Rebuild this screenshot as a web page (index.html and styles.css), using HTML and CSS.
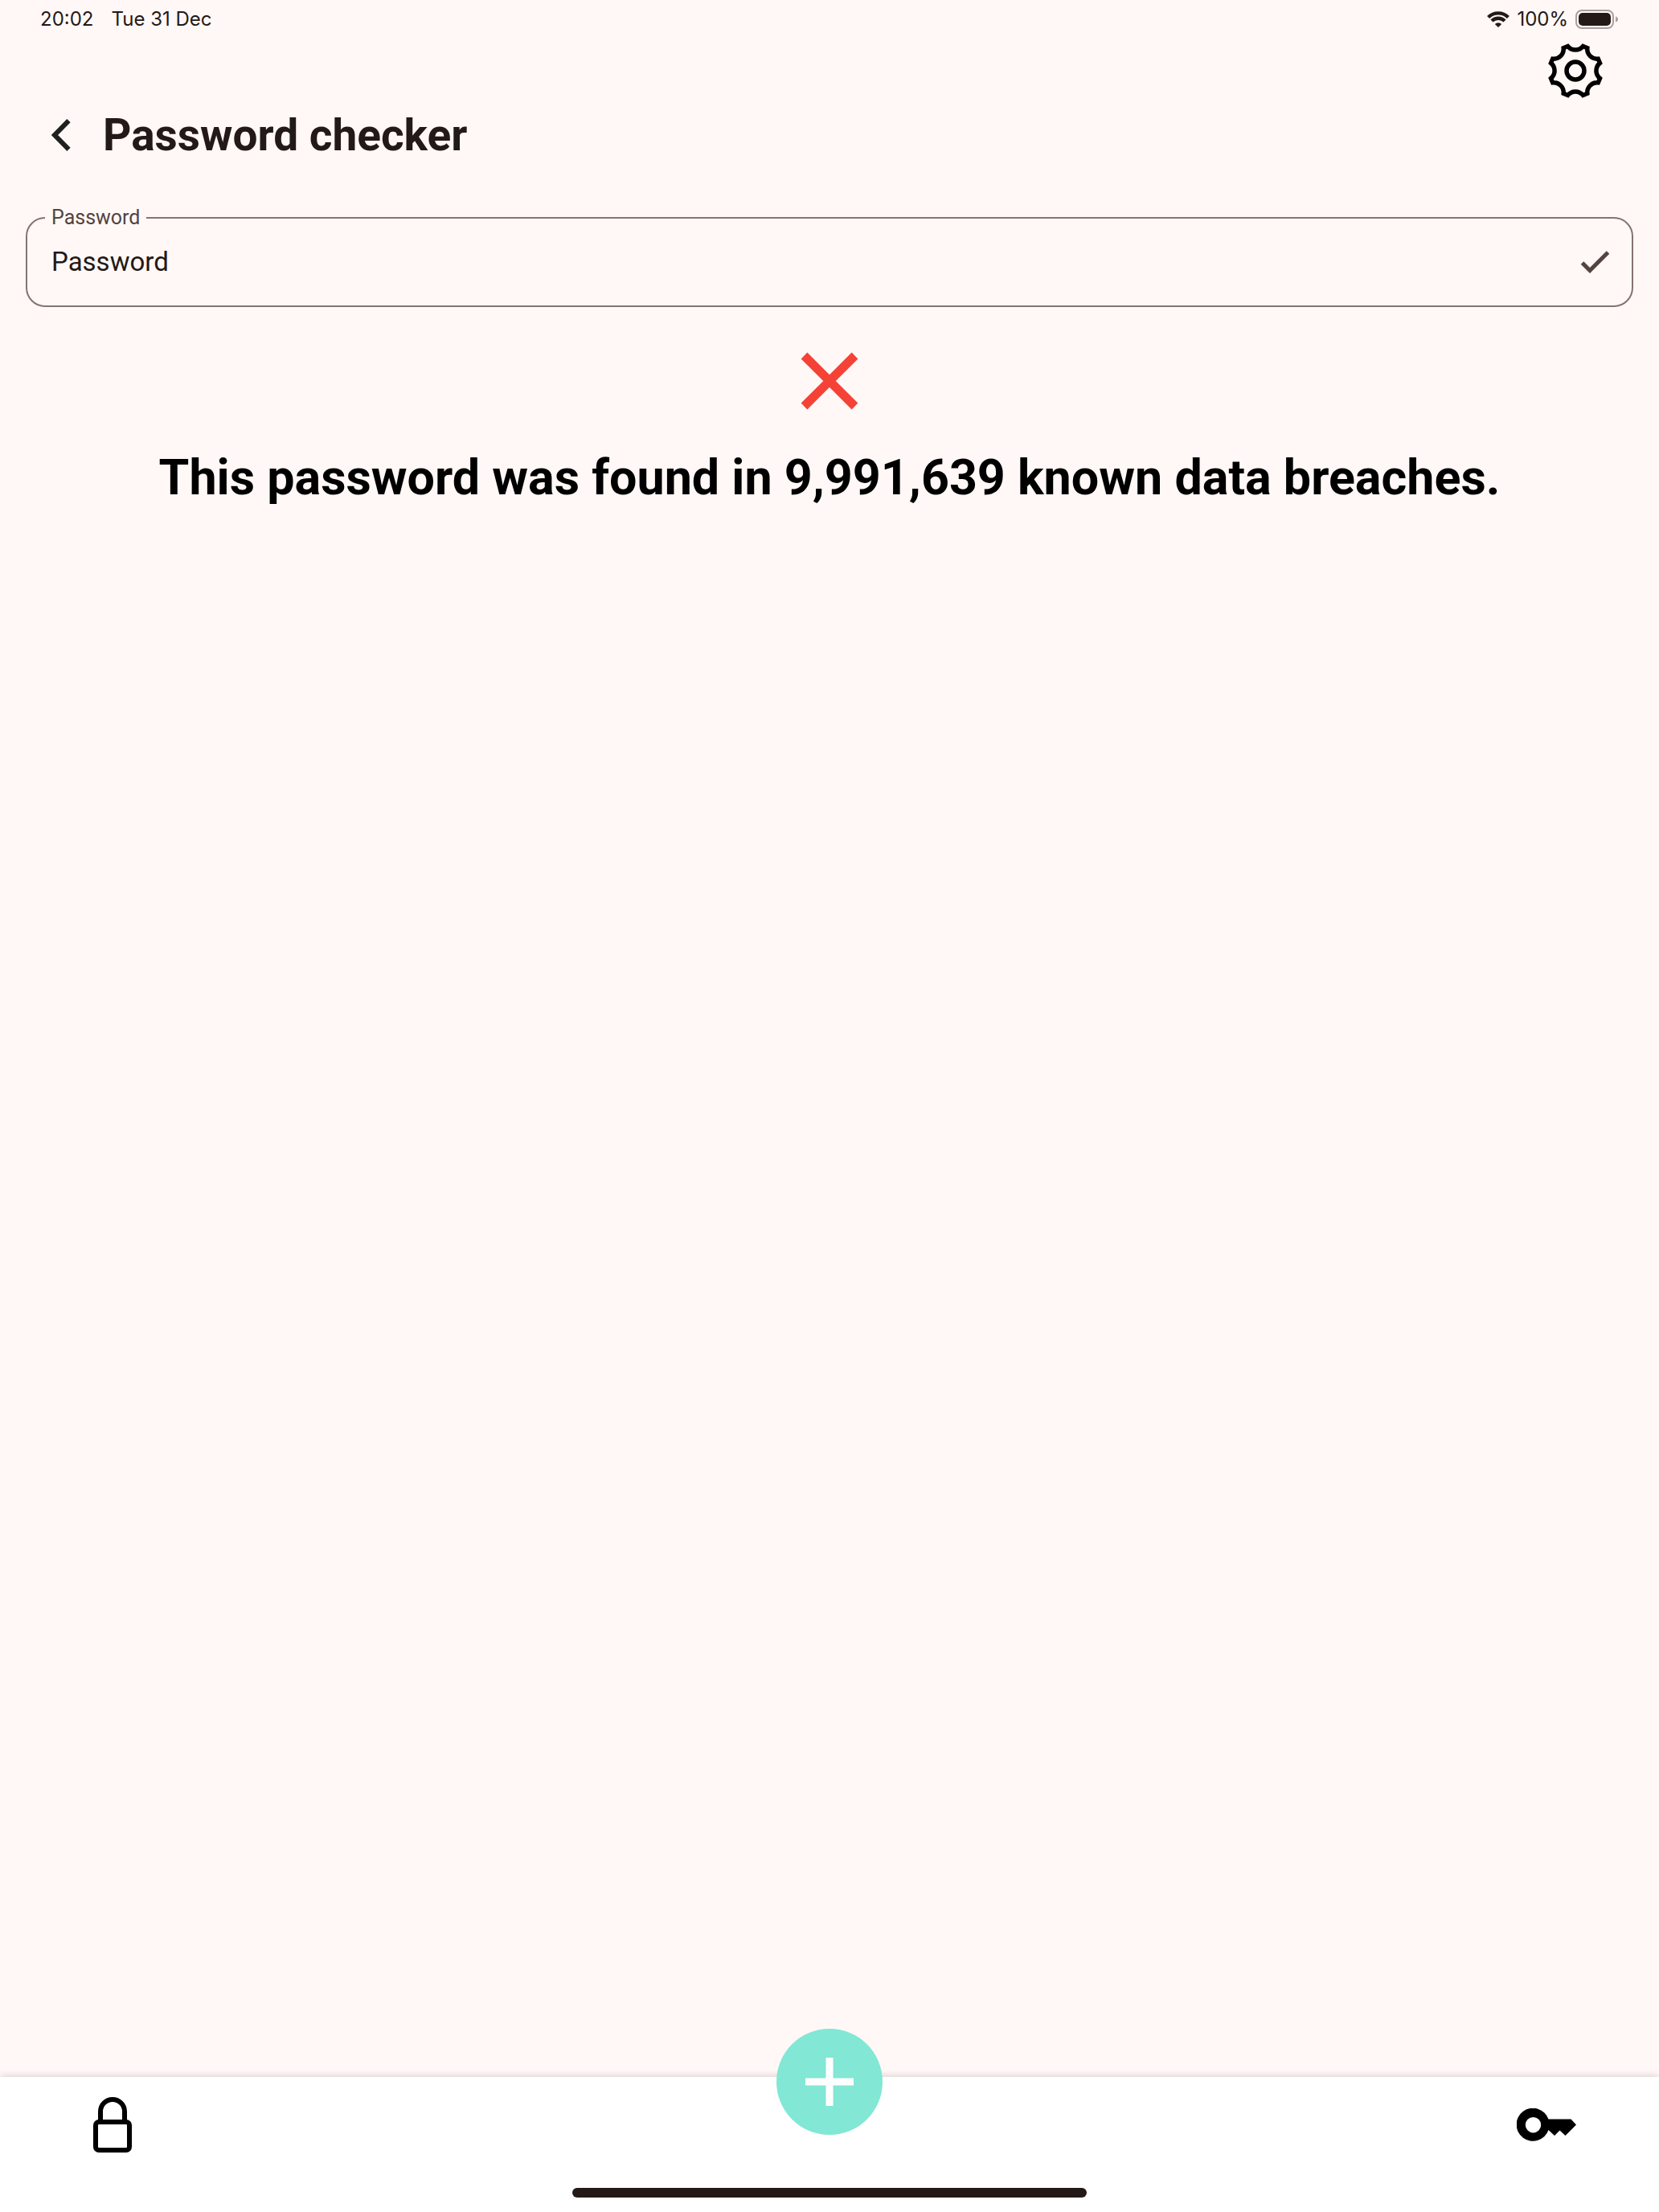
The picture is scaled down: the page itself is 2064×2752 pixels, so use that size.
FILE: index.html
```html
<!DOCTYPE html>
<html lang="en">
<head>
<meta charset="utf-8">
<meta name="viewport" content="width=device-width, initial-scale=1">
<title>Password checker</title>
<link rel="stylesheet" href="styles.css">
</head>
<body>
<div class="status-bar">
  <div class="status-group">
    <span>20:02</span>
    <span>Tue 31 Dec</span>
  </div>
  <div class="status-group status-right">
    <svg class="wifi" viewBox="0 0 28 20" aria-hidden="true">
      <g fill="none" stroke="#231917" stroke-width="4.400">
        <path d="M1.600 7.500A17.600 17.600 0 0 1 26.400 7.500"/>
        <path d="M6 12A11.300 11.300 0 0 1 22 12"/>
      </g>
      <path d="M14 20L9.800 15.900A6 6 0 0 1 18.200 15.900Z" fill="#231917"/>
    </svg>
    <span>100%</span>
    <svg class="battery" viewBox="0 0 54 24" aria-hidden="true">
      <rect x="1" y="1" width="46" height="22" rx="7" fill="none" stroke="#a9a09f" stroke-width="2"/>
      <rect x="4" y="4" width="40" height="16" rx="5" fill="#231917"/>
      <path d="M50 8.500Q53 9.500 53 12T50 15.500Z" fill="#a9a09f"/>
    </svg>
  </div>
</div>
<div class="toolbar">
  <button class="icon-button" type="button" aria-label="Settings">
    <svg class="gear" viewBox="-102 -102 204 204" fill="none" stroke="#000" stroke-width="16">
      <path d="M27.7-88.8L43.2-82.3A35.5 35.5 0 0 0 82.3-43.2L88.8-27.7A35.5 35.5 0 0 0 88.800 27.700L82.300 43.200A35.500 35.500 0 0 0 43.200 82.300L27.700 88.800A35.500 35.500 0 0 0-27.700 88.800L-43.200 82.300A35.500 35.500 0 0 0-82.300 43.200L-88.800 27.700A35.500 35.500 0 0 0-88.800-27.700L-82.300-43.200A35.500 35.500 0 0 0-43.200-82.300L-27.700-88.800A35.500 35.500 0 0 0 27.700-88.800Z"/>
      <circle r="32"/>
    </svg>
  </button>
</div>
<header class="page-header">
  <button class="icon-button" type="button" aria-label="Back">
    <svg class="icon" viewBox="0 0 48 48" fill="none" stroke="#1f2020" stroke-width="6"><path d="M21.500 6.200L4 24 21.500 41.800"/></svg>
  </button>
  <h1>Password checker</h1>
</header>
<main class="content">
  <fieldset class="field">
    <legend><label for="password">Password</label></legend>
    <div class="field-row">
      <input id="password" type="text" value="Password" autocomplete="off">
      <button class="icon-button" type="button" aria-label="Check password">
        <svg class="icon" viewBox="0 0 48 48" fill="none" stroke="#534341" stroke-width="5"><path d="M8.500 25L18 34.500 40.500 12"/></svg>
      </button>
    </div>
  </fieldset>
  <svg class="result-icon" viewBox="0 0 122 122" fill="none" stroke="#f44336" stroke-width="11" aria-hidden="true"><path d="M29.500 29.500L92.500 92.500M92.500 29.500L29.500 92.500"/></svg>
  <p class="result-text">This password was found in 9,991,639 known data breaches.</p>
</main>
<nav class="bottom-bar" aria-label="Main">
  <div class="tabs">
    <button class="icon-button" type="button" aria-label="Passwords">
      <svg class="lock" viewBox="0 0 48 69" fill="none" stroke="#000" stroke-width="6">
        <path d="M9 30V18a15 15 0 0 1 30 0V30"/>
        <rect x="3" y="31" width="42" height="35" rx="4"/>
      </svg>
    </button>
    <button class="icon-button" type="button" aria-label="Generator">
      <svg class="key" viewBox="0 0 74 42"><path fill-rule="evenodd" d="M39.500 13.500H67.500L74 20.500 60.500 34 53.500 27.500 47 34 39.500 27A20.500 20.500 0 1 1 39.500 13.500ZM20.500 11A9.700 9.700 0 1 0 20.500 30.400A9.700 9.700 0 1 0 20.500 11Z"/></svg>
    </button>
  </div>
  <div class="home-indicator"></div>
  <button class="fab" type="button" aria-label="Add password">
    <svg viewBox="0 0 60 60" fill="none" stroke="#fff" stroke-width="9"><path d="M30 0V60M0 30H60"/></svg>
  </button>
</nav>
</body>
</html>
```
FILE: styles.css
```css
* {
  box-sizing: border-box;
}

body {
  margin: 0;
  min-height: 100vh;
  display: flex;
  flex-direction: column;
  background: #fff8f6;
  color: #231917;
  font-family: Roboto, "Liberation Sans", sans-serif;
}

svg {
  display: block;
}

.icon-button {
  display: block;
  padding: 0;
  border: 0;
  background: none;
  cursor: pointer;
}

.icon {
  width: 48px;
  height: 48px;
}

.status-bar {
  display: flex;
  justify-content: space-between;
  align-items: center;
  height: 48px;
  padding: 0 50px;
  font: 400 24px/48px Inter, sans-serif;
}

.status-group {
  display: flex;
  align-items: center;
  gap: 22px;
}

.status-right {
  gap: 9px;
}

.wifi {
  width: 28px;
  height: 20px;
}

.battery {
  width: 54px;
  height: 24px;
}

.toolbar {
  display: flex;
  justify-content: flex-end;
  padding: 5px 69px 0;
}

.gear {
  width: 70px;
  height: 70px;
}

.page-header {
  display: flex;
  align-items: center;
  gap: 16px;
  height: 90px;
  padding: 0 64px;
}

h1 {
  margin: 0;
  font-size: 55px;
  line-height: 72px;
  font-weight: 700;
}

.content {
  flex: 1;
  display: flex;
  flex-direction: column;
  align-items: center;
  padding: 44px 32px 0;
}

.field {
  width: 100%;
  min-width: 0;
  margin: 0;
  padding: 0 22px;
  border: 2px solid #85736f;
  border-radius: 24px;
}

legend {
  padding: 0 8px;
  color: #534341;
  font-size: 25px;
  line-height: 28px;
}

.field-row {
  display: flex;
  align-items: center;
  height: 95px;
  padding: 0 0 14px 8px;
}

.field input {
  flex: 1;
  min-width: 0;
  padding: 0;
  border: 0;
  outline: 0;
  background: none;
  color: #231917;
  font: 33px/48px Roboto, "Liberation Sans", sans-serif;
}

.result-icon {
  width: 122px;
  height: 122px;
  margin-top: 31px;
}

.result-text {
  margin: 23px 0 0;
  color: #000;
  font-size: 61px;
  line-height: 72px;
  font-weight: 700;
  text-align: center;
}

.bottom-bar {
  position: relative;
  background: #fff;
  box-shadow: 0 0 10px rgba(0, 0, 0, 0.2);
}

.tabs {
  display: flex;
  justify-content: space-between;
  align-items: center;
  height: 119px;
  padding: 0 103px 0 116px;
}

.lock {
  width: 48px;
  height: 69px;
}

.key {
  width: 74px;
  height: 42px;
}

.home-indicator {
  width: 31%;
  height: 12px;
  margin: 19px auto 18px;
  border-radius: 6px;
  background: #231917;
}

.fab {
  position: absolute;
  top: -60px;
  left: calc(50% - 66px);
  display: flex;
  align-items: center;
  justify-content: center;
  width: 132px;
  height: 132px;
  padding: 0;
  border: 0;
  border-radius: 50%;
  background: #82e7d4;
  cursor: pointer;
}

.fab svg {
  width: 60px;
  height: 60px;
}
```
